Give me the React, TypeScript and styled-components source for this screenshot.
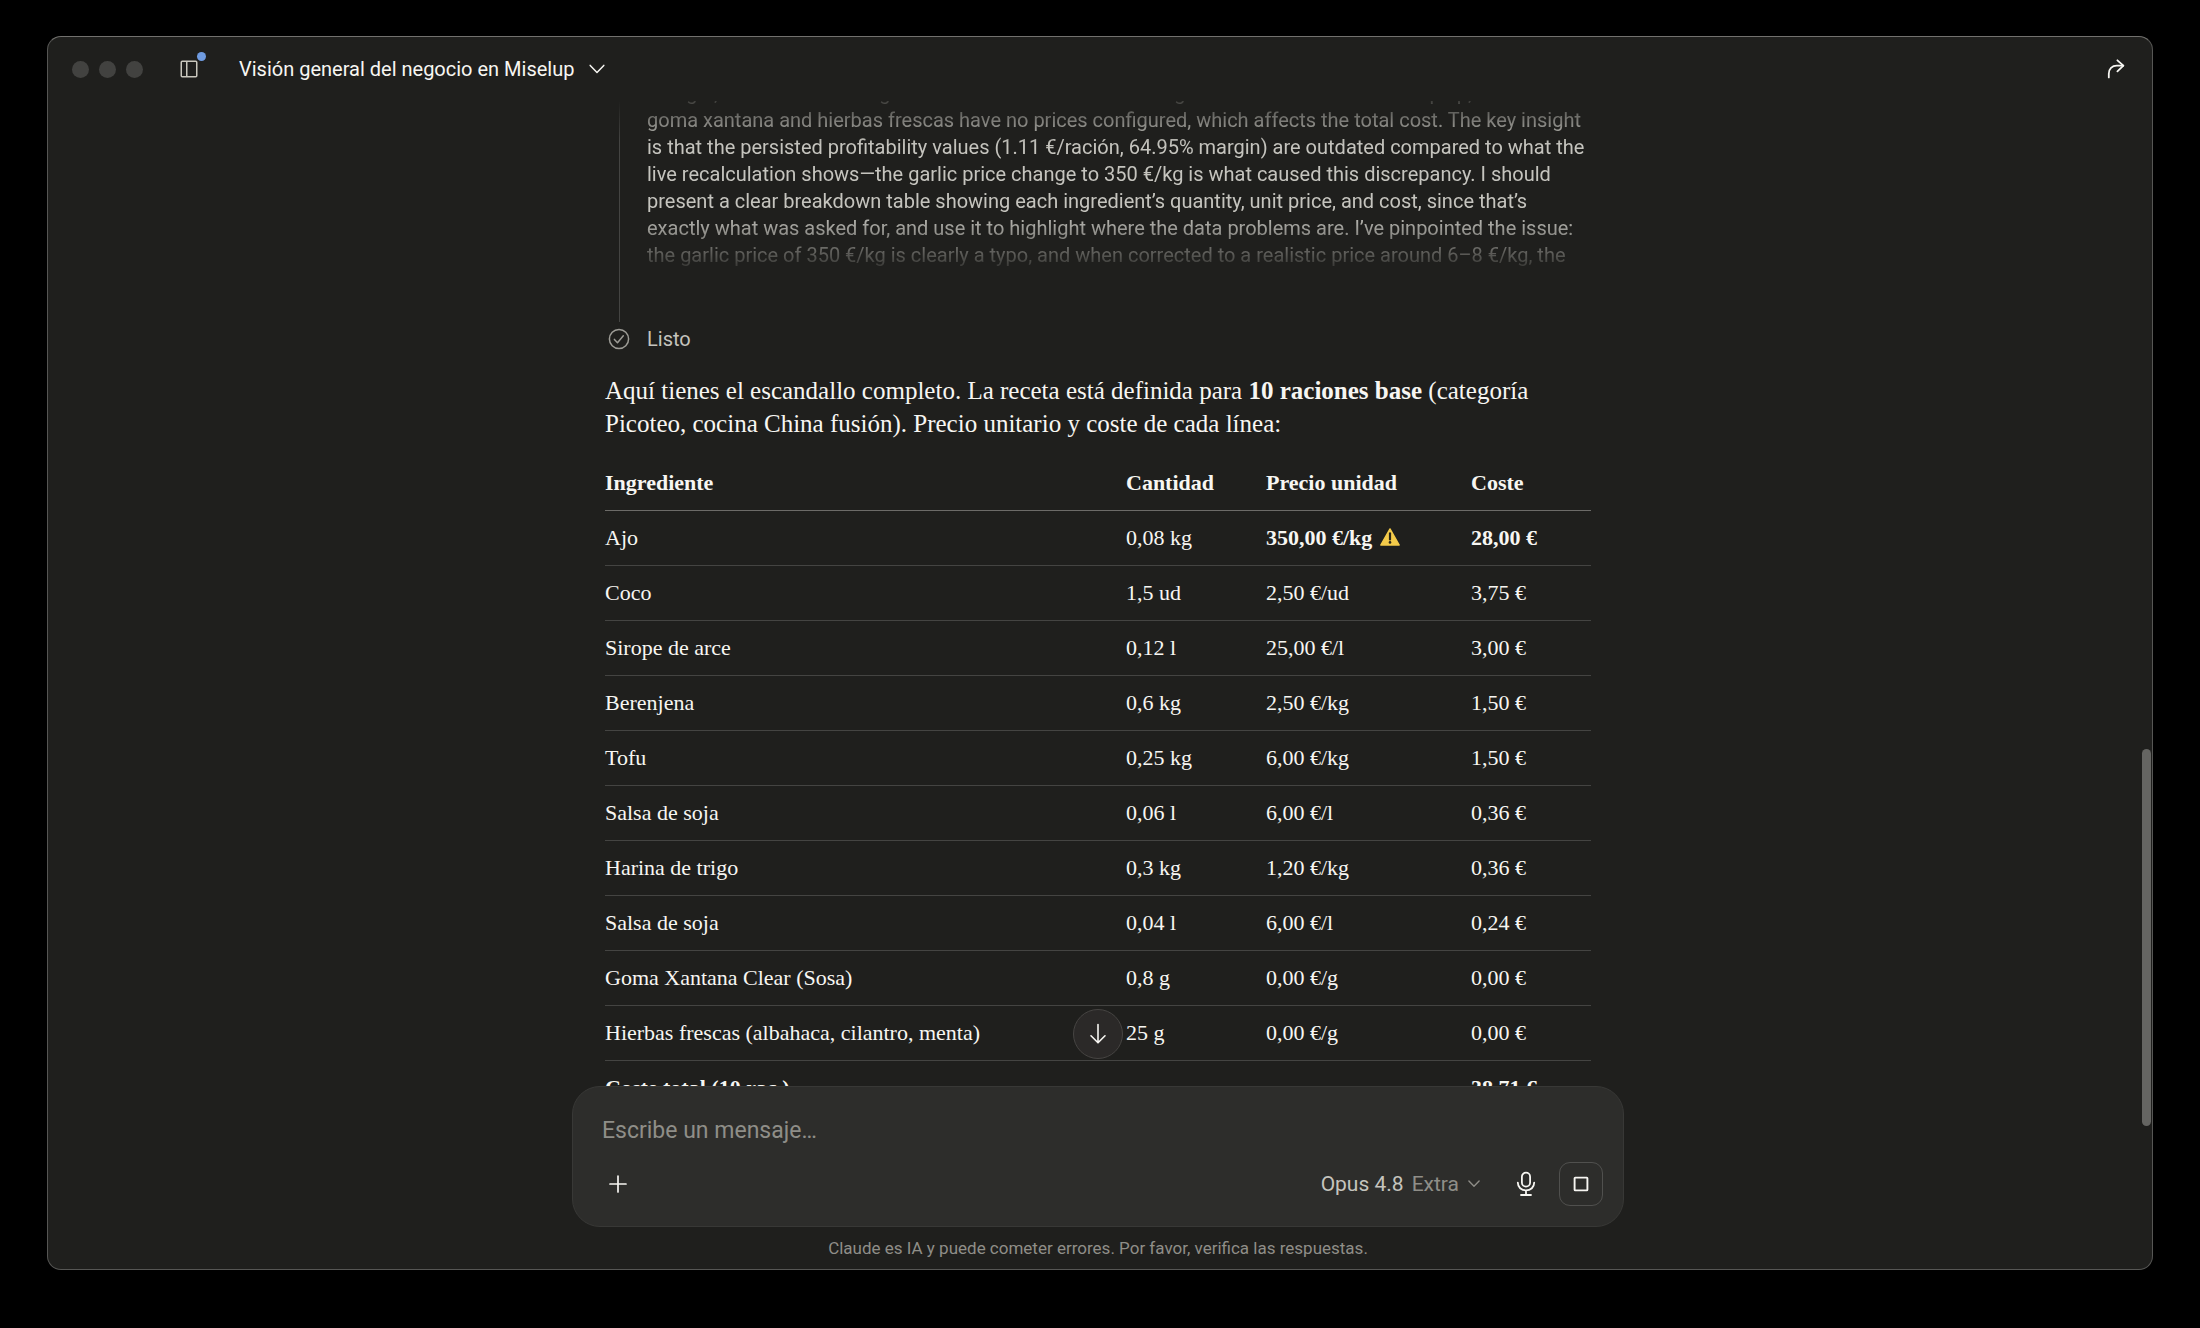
import React from "react";
import styled, { createGlobalStyle, css } from "styled-components";

const color = {
  surface: "#1f1f1d",
  raised: "#2d2d2b",
  edge: "#565654",
  line: "#444442",
  lineStrong: "#6c6b68",
  text: "#f7f6f2",
  soft: "#c5c4be",
  muted: "#8f8e88",
};

const sans = `Roboto, "Liberation Sans", sans-serif`;
const serif = `"Liberation Serif", "DejaVu Serif", serif`;

const GlobalStyle = createGlobalStyle`
  *, *::before, *::after { box-sizing: border-box; }
  body { margin: 0; background: #000; font-family: ${sans}; color: ${color.text}; }
  button, input { font: inherit; color: inherit; }
`;

const Desktop = styled.div`
  height: 100vh;
  padding: 36px 47px 58px;
  background: #000;
`;

const Window = styled.main`
  position: relative;
  display: flex;
  flex-direction: column;
  height: 100%;
  overflow: hidden;
  background: ${color.surface};
  border: 1px solid ${color.edge};
  border-top-color: #72716e;
  border-radius: 14px;
`;

const TitleBar = styled.header`
  display: flex;
  align-items: center;
  flex: none;
  height: 64px;
  padding: 0 20px 0 24px;
`;

const TrafficLights = styled.div`
  display: flex;
  gap: 10px;
  margin-right: 30px;
`;

const Light = styled.span`
  width: 17px;
  height: 17px;
  border-radius: 50%;
  background: #424240;
`;

const plainButton = css`
  display: inline-flex;
  align-items: center;
  justify-content: center;
  padding: 0;
  border: 0;
  background: none;
  cursor: pointer;
`;

const IconButton = styled.button`
  ${plainButton}
  position: relative;
  width: 32px;
  height: 32px;
`;

const UnreadDot = styled.span`
  position: absolute;
  top: -1px;
  right: -1px;
  width: 9px;
  height: 9px;
  border-radius: 50%;
  background: #6f9be0;
`;

const TitleButton = styled.button`
  ${plainButton}
  gap: 15px;
  margin: 0 auto 0 34px;
  font-size: 20px;
  line-height: 28px;
`;

const Conversation = styled.section`
  flex: 1;
  min-height: 0;
  overflow: hidden;
  padding-right: 4px;
`;

const Column = styled.div`
  max-width: 986px;
  margin: 0 auto;
`;

const Timeline = styled.div`
  display: grid;
  grid-template-columns: 28px 1fr;
  grid-template-rows: auto 34px;
  column-gap: 14px;
  align-items: center;
  justify-items: center;
  font-size: 20px;
  line-height: 27px;
  color: ${color.soft};
`;

const Rail = styled.div`
  align-self: stretch;
  width: 1px;
  background: linear-gradient(to bottom, ${color.surface}, ${color.line} 40px);
`;

const Thinking = styled.div`
  display: flex;
  flex-direction: column;
  justify-content: flex-end;
  justify-self: stretch;
  height: 176px;
  margin-bottom: 45px;
  padding-bottom: 8px;
  overflow: hidden;
  white-space: nowrap;
  mask-image: linear-gradient(
    to bottom,
    rgba(0, 0, 0, 0.2),
    #000 44px,
    #000 calc(100% - 64px),
    transparent
  );
`;

const StepLabel = styled.div`
  justify-self: start;
`;

const Answer = styled.article`
  margin-top: 18px;
  font-family: ${serif};
`;

const Paragraph = styled.p`
  margin: 0 0 16px;
  font-size: 25px;
  line-height: 33px;
`;

const Table = styled.table`
  width: 100%;
  table-layout: fixed;
  border-collapse: separate;
  border-spacing: 0;
  font-size: 22px;
  line-height: 30px;
  text-align: left;
  white-space: nowrap;
`;

const Col = styled.col<{ $width?: number }>`
  width: ${(p) => (p.$width ? `${p.$width}px` : "auto")};
`;

const HeadCell = styled.th`
  padding: 12px 0;
  font-weight: 700;
  border-bottom: 1px solid ${color.lineStrong};
`;

const Cell = styled.td<{ $strong?: boolean }>`
  padding: 12px 0;
  font-weight: ${(p) => (p.$strong ? 700 : 400)};
  border-bottom: 1px solid ${color.line};
`;

const WarningIcon = styled.svg`
  display: inline-block;
  margin-left: 8px;
  vertical-align: -1px;
`;

const Dock = styled.footer`
  position: relative;
  flex: none;
  padding: 0 4px 9px 0;
`;

const ScrollDown = styled.button`
  ${plainButton}
  position: absolute;
  bottom: calc(100% + 27px);
  left: calc(50% - 27px);
  width: 50px;
  height: 50px;
  border: 1px solid #464442;
  border-radius: 50%;
  background: #2b2928;
`;

const Composer = styled.form`
  max-width: 1052px;
  margin: 0 auto;
  padding: 29px 20px 20px 29px;
  border: 1px solid #383836;
  border-radius: 28px;
  background: ${color.raised};
`;

const MessageInput = styled.input`
  display: block;
  width: 100%;
  height: 30px;
  margin-bottom: 16px;
  padding: 0;
  border: 0;
  outline: 0;
  background: none;
  font-size: 23px;
  line-height: 30px;

  &::placeholder {
    color: ${color.muted};
    opacity: 1;
  }
`;

const Toolbar = styled.div`
  display: flex;
  align-items: center;
  justify-content: space-between;
`;

const ToolGroup = styled.div`
  display: flex;
  align-items: center;
  gap: 17px;
`;

const ModelButton = styled.button`
  ${plainButton}
  gap: 8px;
  margin-right: 13px;
  font-size: 21px;
  line-height: 28px;
  color: ${color.soft};
`;

const Effort = styled.span`
  display: inline-flex;
  align-items: center;
  gap: 9px;
  color: ${color.muted};
`;

const StopButton = styled.button`
  ${plainButton}
  width: 44px;
  height: 44px;
  border: 1px solid #50504e;
  border-radius: 11px;
`;

const Disclaimer = styled.p`
  margin: 9px 0 0;
  font-size: 17px;
  line-height: 24px;
  text-align: center;
  color: ${color.muted};
`;

const ScrollThumb = styled.div`
  position: absolute;
  top: 712px;
  right: 1px;
  width: 9px;
  height: 377px;
  border-radius: 5px;
  background: #656562;
`;

const thinkingLines = [
  "Vinegar, coconut and wild garlic are fine at their current margin while both the rest of keep up, so",
  "goma xantana and hierbas frescas have no prices configured, which affects the total cost. The key insight",
  "is that the persisted profitability values (1.11 €/ración, 64.95% margin) are outdated compared to what the",
  "live recalculation shows—the garlic price change to 350 €/kg is what caused this discrepancy. I should",
  "present a clear breakdown table showing each ingredient’s quantity, unit price, and cost, since that’s",
  "exactly what was asked for, and use it to highlight where the data problems are. I’ve pinpointed the issue:",
  "the garlic price of 350 €/kg is clearly a typo, and when corrected to a realistic price around 6–8 €/kg, the",
];

interface Ingredient {
  name: string;
  amount: string;
  price: string;
  cost: string;
  flagged?: boolean;
}

const ingredients: Ingredient[] = [
  { name: "Ajo", amount: "0,08 kg", price: "350,00 €/kg", cost: "28,00 €", flagged: true },
  { name: "Coco", amount: "1,5 ud", price: "2,50 €/ud", cost: "3,75 €" },
  { name: "Sirope de arce", amount: "0,12 l", price: "25,00 €/l", cost: "3,00 €" },
  { name: "Berenjena", amount: "0,6 kg", price: "2,50 €/kg", cost: "1,50 €" },
  { name: "Tofu", amount: "0,25 kg", price: "6,00 €/kg", cost: "1,50 €" },
  { name: "Salsa de soja", amount: "0,06 l", price: "6,00 €/l", cost: "0,36 €" },
  { name: "Harina de trigo", amount: "0,3 kg", price: "1,20 €/kg", cost: "0,36 €" },
  { name: "Salsa de soja", amount: "0,04 l", price: "6,00 €/l", cost: "0,24 €" },
  { name: "Goma Xantana Clear (Sosa)", amount: "0,8 g", price: "0,00 €/g", cost: "0,00 €" },
  { name: "Hierbas frescas (albahaca, cilantro, menta)", amount: "25 g", price: "0,00 €/g", cost: "0,00 €" },
];

const SidebarIcon = () => (
  <svg width="18" height="18" viewBox="0 0 18 18" fill="none" stroke="#c9c7bd" strokeWidth="1.5">
    <rect x="1.25" y="1.25" width="15.5" height="15.5" rx="1" />
    <path d="M6.75 1.5v15" />
  </svg>
);

const ChevronIcon = ({ width, stroke = 1.5 }: { width: number; stroke?: number }) => (
  <svg width={width} height={(width * 10) / 16} viewBox="0 0 16 10" fill="none" stroke="currentColor" strokeWidth={stroke} strokeLinecap="round" strokeLinejoin="round">
    <path d="M1.2 1.4 8 8.4l6.8-7" />
  </svg>
);

const ShareIcon = () => (
  <svg width="18" height="20" viewBox="0 0 18 20" fill="none" stroke="currentColor" strokeWidth="1.8" strokeLinecap="round" strokeLinejoin="round">
    <path d="M1.8 18.4v-3.6c0-5 3.2-8.1 8-8.1h6.4" />
    <path d="M10.4 1.3l6 5.4-6 5.6" />
  </svg>
);

const DoneIcon = () => (
  <svg width="22" height="22" viewBox="0 0 22 22" fill="none" stroke="#9d9c96" strokeWidth="1.5" strokeLinecap="round" strokeLinejoin="round">
    <circle cx="11" cy="11" r="9.6" />
    <path d="M6.4 11.4l3.1 3.4 5.8-7" />
  </svg>
);

const Warning = () => (
  <WarningIcon width="20" height="18" viewBox="0 0 20 18" role="img" aria-label="Aviso">
    <path d="M10 .9 19.2 17H.8z" fill="#f4cb4a" stroke="#f4cb4a" strokeWidth="1.4" strokeLinejoin="round" />
    <path d="M10 5.4v6" stroke="#2a2618" strokeWidth="2.2" strokeLinecap="round" />
    <circle cx="10" cy="14.4" r="1.3" fill="#2a2618" />
  </WarningIcon>
);

const ArrowDownIcon = () => (
  <svg width="18" height="22" viewBox="0 0 18 22" fill="none" stroke="currentColor" strokeWidth="1.6" strokeLinecap="round" strokeLinejoin="round">
    <path d="M9 1.6v18M2 12.8l7 7 7-7" />
  </svg>
);

const PlusIcon = () => (
  <svg width="18" height="18" viewBox="0 0 18 18" fill="none" stroke="currentColor" strokeWidth="1.7" strokeLinecap="round">
    <path d="M9 1v16M1 9h16" />
  </svg>
);

const MicIcon = () => (
  <svg width="20" height="26" viewBox="0 0 20 26" fill="none" stroke="currentColor" strokeWidth="1.8" strokeLinecap="round">
    <rect x="5.9" y="1.6" width="8.2" height="14" rx="4.1" />
    <path d="M1.8 11.6c0 4.6 3.6 7.8 8.2 7.8s8.2-3.2 8.2-7.8M10 19.4v4.4M5 24h10" />
  </svg>
);

const StopIcon = () => (
  <svg width="16" height="16" viewBox="0 0 16 16" fill="none" stroke="currentColor" strokeWidth="1.9" strokeLinejoin="round">
    <rect x="1.6" y="1.6" width="12.8" height="12.8" rx=".6" />
  </svg>
);

export default function App() {
  return (
    <>
      <GlobalStyle />
      <Desktop>
        <Window>
          <TitleBar>
            <TrafficLights>
              <Light />
              <Light />
              <Light />
            </TrafficLights>
            <IconButton type="button" aria-label="Barra lateral">
              <SidebarIcon />
              <UnreadDot />
            </IconButton>
            <TitleButton type="button" aria-haspopup="menu">
              Visión general del negocio en Miselup
              <ChevronIcon width={16} />
            </TitleButton>
            <IconButton type="button" aria-label="Compartir">
              <ShareIcon />
            </IconButton>
          </TitleBar>

          <Conversation>
            <Column>
              <Timeline>
                <Rail />
                <Thinking>
                  {thinkingLines.map((line) => (
                    <div key={line}>{line}</div>
                  ))}
                </Thinking>
                <DoneIcon />
                <StepLabel>Listo</StepLabel>
              </Timeline>

              <Answer>
                <Paragraph>
                  Aquí tienes el escandallo completo. La receta está definida para{" "}
                  <strong>10 raciones base</strong> (categoría Picoteo, cocina China fusión). Precio
                  unitario y coste de cada línea:
                </Paragraph>
                <Table>
                  <colgroup>
                    <Col />
                    <Col $width={140} />
                    <Col $width={205} />
                    <Col $width={120} />
                  </colgroup>
                  <thead>
                    <tr>
                      <HeadCell scope="col">Ingrediente</HeadCell>
                      <HeadCell scope="col">Cantidad</HeadCell>
                      <HeadCell scope="col">Precio unidad</HeadCell>
                      <HeadCell scope="col">Coste</HeadCell>
                    </tr>
                  </thead>
                  <tbody>
                    {ingredients.map((item, index) => (
                      <tr key={index}>
                        <Cell>{item.name}</Cell>
                        <Cell>{item.amount}</Cell>
                        <Cell $strong={item.flagged}>
                          {item.price}
                          {item.flagged && <Warning />}
                        </Cell>
                        <Cell $strong={item.flagged}>{item.cost}</Cell>
                      </tr>
                    ))}
                    <tr>
                      <Cell $strong>Coste total (10 rac.)</Cell>
                      <Cell />
                      <Cell />
                      <Cell $strong>38,71 €</Cell>
                    </tr>
                  </tbody>
                </Table>
              </Answer>
            </Column>
          </Conversation>

          <Dock>
            <ScrollDown type="button" aria-label="Ir al final">
              <ArrowDownIcon />
            </ScrollDown>
            <Composer onSubmit={(event) => event.preventDefault()}>
              <MessageInput type="text" aria-label="Mensaje" placeholder="Escribe un mensaje…" />
              <Toolbar>
                <IconButton type="button" aria-label="Añadir">
                  <PlusIcon />
                </IconButton>
                <ToolGroup>
                  <ModelButton type="button" aria-haspopup="menu">
                    Opus 4.8
                    <Effort>
                      Extra
                      <ChevronIcon width={12} stroke={1.8} />
                    </Effort>
                  </ModelButton>
                  <IconButton type="button" aria-label="Dictar">
                    <MicIcon />
                  </IconButton>
                  <StopButton type="button" aria-label="Detener">
                    <StopIcon />
                  </StopButton>
                </ToolGroup>
              </Toolbar>
            </Composer>
            <Disclaimer>Claude es IA y puede cometer errores. Por favor, verifica las respuestas.</Disclaimer>
          </Dock>
          <ScrollThumb />
        </Window>
      </Desktop>
    </>
  );
}
